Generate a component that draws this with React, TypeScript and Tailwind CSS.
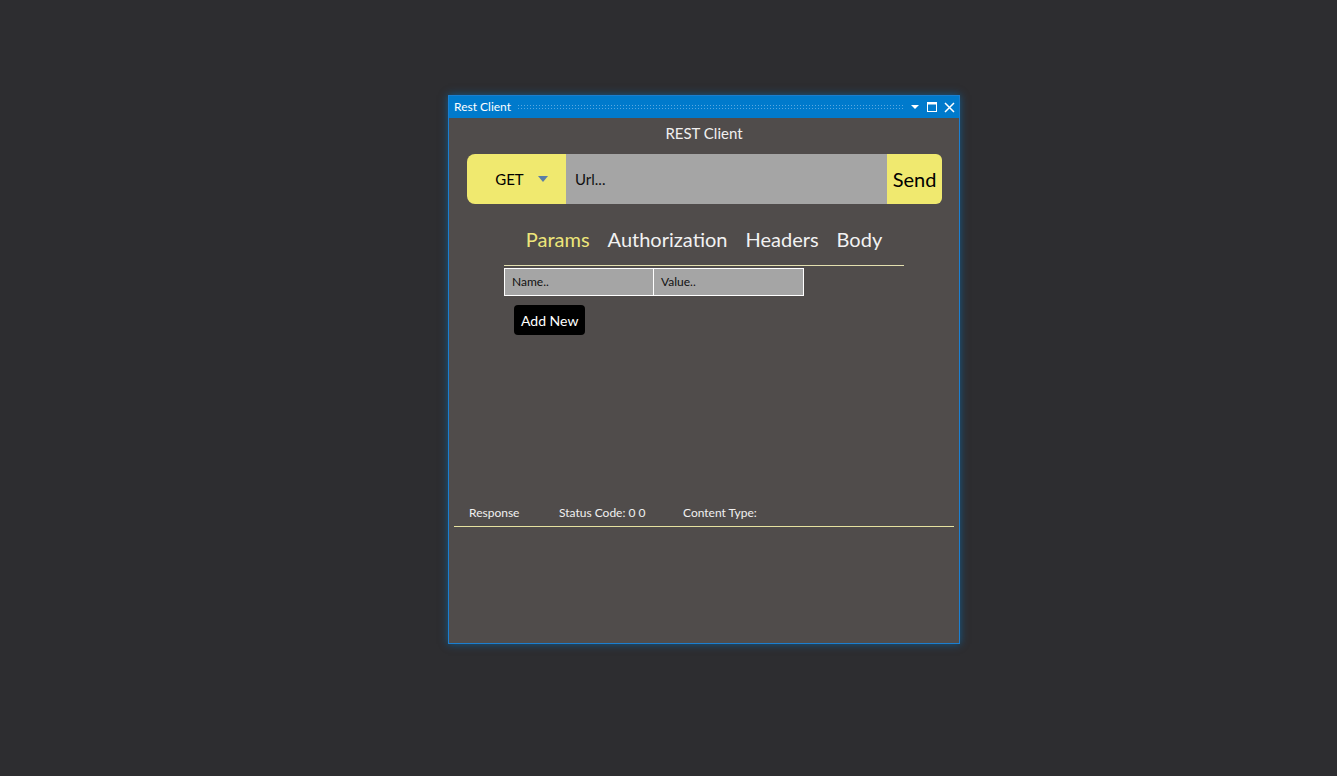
import { useState } from 'react';

const tabs = ['Params', 'Authorization', 'Headers', 'Body'];

function TitleBar() {
  return (
    <div className="flex items-center h-[22px] bg-[#007acc] pl-[5px] pr-[4px] text-white">
      <span className="text-[12px] leading-none">Rest Client</span>
      {/* grip pattern */}
      <div className="flex-1 mx-[6px] h-[6px] bg-[radial-gradient(circle,_#5aa8e0_0.8px,_transparent_1px)] bg-[length:3px_3px]" />
      <div className="flex items-center gap-[7px]">
        <svg width="10" height="10" viewBox="0 0 10 10">
          <path d="M1 3 L9 3 L5 7 Z" fill="white" />
        </svg>
        <svg width="10" height="10" viewBox="0 0 10 10">
          <rect x="0.5" y="0.5" width="9" height="9" fill="none" stroke="white" />
          <rect x="0.5" y="0.5" width="9" height="2" fill="white" />
        </svg>
        <svg width="11" height="11" viewBox="0 0 11 11">
          <path d="M1 1 L10 10 M10 1 L1 10" stroke="white" strokeWidth="1.5" />
        </svg>
      </div>
    </div>
  );
}

export default function App() {
  const [active, setActive] = useState('Params');

  return (
    <div className="w-full h-[776px] bg-[#2d2d30] flex pt-[95px] pl-[448px] font-['Lato',_sans-serif]">
      <div className="w-[512px] h-[549px] border border-[#1c7fd0] shadow-[0_0_8px_rgba(0,122,204,0.6)] flex flex-col bg-[#504c4b]">
        <TitleBar />

        <div className="flex flex-col flex-1">
          <div className="text-center text-[15px] text-[#f0f0f0] mt-[5px] leading-[20px]">REST Client</div>

          {/* request bar */}
          <div className="flex h-[50px] mt-[11px] ml-[18px] mr-[17px]">
            <div className="w-[99px] bg-[#f0e96f] rounded-l-[8px] flex items-center justify-center gap-[14px] pl-[10px]">
              <span className="text-[15px] text-black">GET</span>
              <svg width="10" height="6" viewBox="0 0 10 6">
                <path d="M0 0 L10 0 L5 6 Z" fill="#5b7ea6" />
              </svg>
            </div>
            <div className="flex-1 bg-[#a5a5a5] flex items-center px-[9px] text-[15px] text-[#111]">Url...</div>
            <div className="w-[55px] bg-[#f0e96f] rounded-r-[6px] flex items-center justify-center text-[20px] text-black">Send</div>
          </div>

          {/* tabs */}
          <div className="mx-auto w-[400px] mt-[21px]">
            <div className="flex justify-center gap-[18px] text-[20px] leading-[30px] h-[30px] -mt-px">
              {tabs.map((t) => (
                <span
                  key={t}
                  onClick={() => setActive(t)}
                  className={t === active ? 'text-[#ede57a]' : 'text-[#f2f2f2]'}
                >
                  {t}
                </span>
              ))}
            </div>
            <div className="h-px bg-[#e4e0b0] mt-[11px]" />
            <div className="flex mt-[2px]">
              <div className="w-[150px] h-[28px] bg-[#a5a5a5] border border-white flex items-center px-[7px] text-[12px] text-[#111]">Name..</div>
              <div className="w-[150px] h-[28px] bg-[#a5a5a5] border border-white border-l-0 flex items-center px-[7px] text-[12px] text-[#111]">Value..</div>
            </div>
            <button className="mt-[9px] ml-[10px] h-[30px] px-[7px] bg-black rounded-[4px] text-white text-[14px]">Add New</button>
          </div>

          <div className="flex-1" />

          {/* response */}
          <div className="flex items-center text-[12px] text-[#f0f0f0] pl-[20px] h-[16px]">
            <span className="w-[90px]">Response</span>
            <span className="w-[124px]">Status Code: 0 0</span>
            <span>Content Type:</span>
          </div>
          <div className="h-px bg-[#e6e2a0] mx-[5px] mt-[5px] mb-[116px]" />
        </div>
      </div>
    </div>
  );
}
